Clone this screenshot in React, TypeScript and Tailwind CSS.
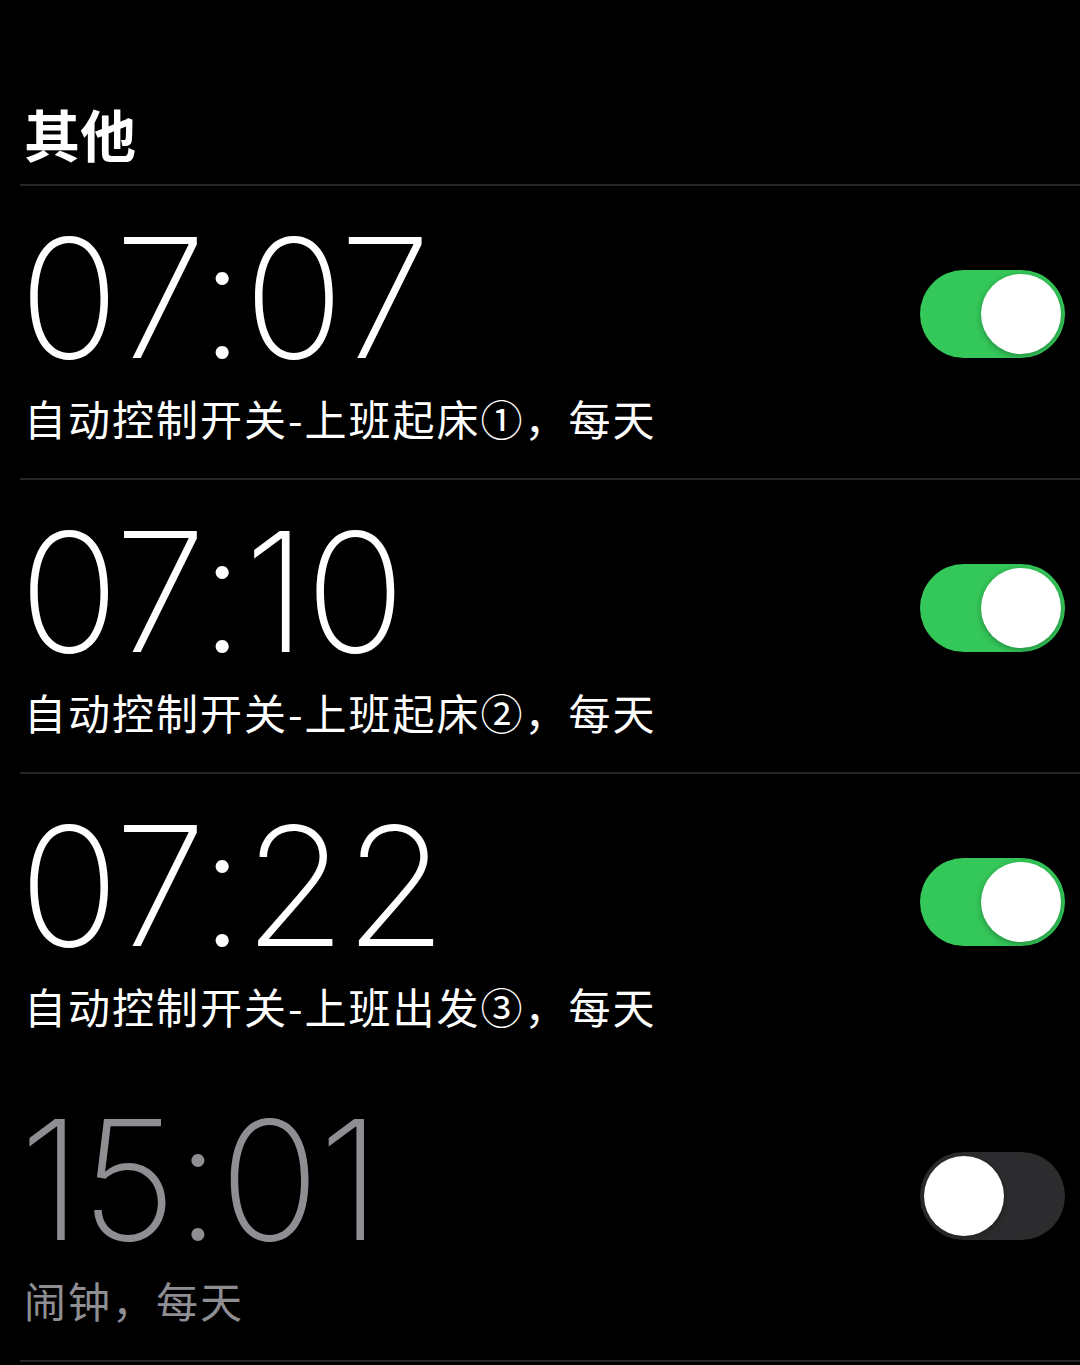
type Alarm = {
  time: string
  label: string
  on: boolean
  divider: boolean
}

const alarms: Alarm[] = [
  { time: '07:07', label: '自动控制开关-上班起床①，每天', on: true, divider: true },
  { time: '07:10', label: '自动控制开关-上班起床②，每天', on: true, divider: true },
  { time: '07:22', label: '自动控制开关-上班出发③，每天', on: true, divider: false },
  { time: '15:01', label: '闹钟，每天', on: false, divider: true },
]

const cjk = { fontFamily: '"Noto Sans CJK SC", "Noto Sans", sans-serif' }
const digits = { fontFamily: 'Inter, Roboto, sans-serif' }

function Toggle({ on }: { on: boolean }) {
  return (
    <div
      className={`flex h-[88px] w-[145px] items-center rounded-full px-[4px] ${
        on ? 'justify-end bg-[#34c759]' : 'justify-start bg-[#2c2c2e]'
      }`}
    >
      <div className="h-[80px] w-[80px] rounded-full bg-white shadow-[0_2px_6px_rgba(0,0,0,0.3)]" />
    </div>
  )
}

function AlarmRow({ alarm }: { alarm: Alarm }) {
  const tone = alarm.on ? 'text-white' : 'text-[#8e8e93]'
  return (
    <div
      className={`ml-[20px] flex h-[294px] justify-between border-b-2 ${
        alarm.divider ? 'border-[#262626]' : 'border-transparent'
      }`}
    >
      <div className="pl-[7px]">
        <div
          className={`mt-[42px] -ml-2 text-[166px] leading-[140px] font-extralight tracking-[-1.5px] ${tone}`}
          style={digits}
        >
          {alarm.time}
        </div>
        <div className={`mt-[26px] -ml-[3px] text-[42px] leading-[48px] tracking-[2px] ${tone}`} style={cjk}>
          {alarm.label}
        </div>
      </div>
      <div className="mt-[84px] mr-[15px]">
        <Toggle on={alarm.on} />
      </div>
    </div>
  )
}

export default function App() {
  return (
    <div className="min-h-[1365px] w-[1080px] overflow-hidden bg-black">
      <div className="ml-[20px] border-b-2 border-[#262626] pt-[100px] pb-[18px] pl-[4px]">
        <h2 className="text-[56px] leading-[66px] font-bold text-white" style={cjk}>
          其他
        </h2>
      </div>
      {alarms.map((a) => (
        <AlarmRow key={a.time} alarm={a} />
      ))}
    </div>
  )
}
